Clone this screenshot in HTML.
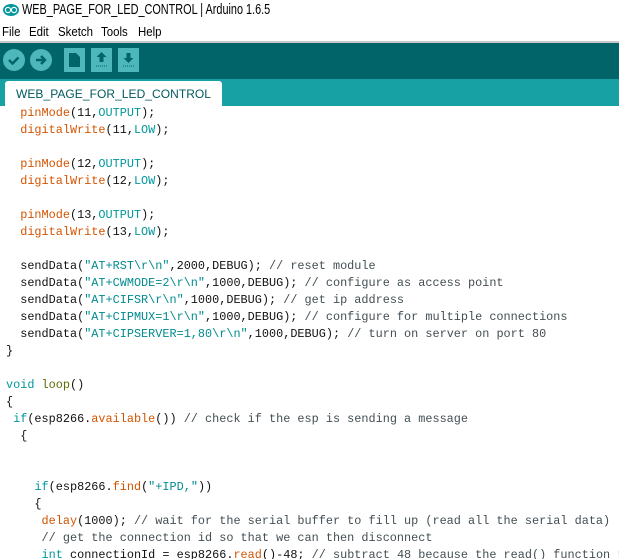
<!DOCTYPE html>
<html><head><meta charset="utf-8"><style>
*{margin:0;padding:0;box-sizing:border-box}
body{width:619px;height:559px;overflow:hidden;background:#fff;position:relative;font-family:"Liberation Sans",sans-serif}
.title{position:absolute;left:0;top:0;height:22px;width:619px;font-size:14.5px;color:#000}
.menu{position:absolute;left:0;top:22px;height:20px;font-size:13px}
.menu span{transform:scaleX(0.88);transform-origin:0 0;white-space:nowrap}
.sep{position:absolute;left:0;top:41px;width:619px;height:2px;background:#c8c8c8}
.tb{position:absolute;left:0;top:43px;width:619px;height:37px;background:#006468}
.tabs{position:absolute;left:0;top:79px;width:619px;height:27px;background:#17a1a5}
.tab{position:absolute;left:5px;top:2px;width:217px;height:25px;background:#fff;border-radius:3px 3px 0 0;color:#005a5e;font-size:12px;padding:6px 0 0 11px;letter-spacing:0.05px}
.code{position:absolute;left:6px;top:105px;width:613px;height:454px;overflow:hidden;font-family:"Liberation Mono",monospace;font-size:11.85px;line-height:17px;color:#111;white-space:pre}
.f{color:#d35400}.c{color:#00979c}.s{color:#008b8f}.k{color:#00979c}.m{color:#434f54}.o{color:#5e6d03}
</style></head><body>
<div class="title">
<svg style="position:absolute;left:3px;top:4px" width="16" height="12" viewBox="0 0 16 12"><ellipse cx="8" cy="6" rx="8" ry="6" fill="#00979c"/><circle cx="5" cy="6" r="2.6" fill="none" stroke="#fff" stroke-width="1.2"/><circle cx="11" cy="6" r="2.6" fill="none" stroke="#fff" stroke-width="1.2"/></svg>
<span style="position:absolute;left:22px;top:2px;transform:scaleX(0.75);transform-origin:0 0;white-space:nowrap">WEB_PAGE_FOR_LED_CONTROL | Arduino 1.6.5</span></div>
<div class="menu"><span style="position:absolute;left:2px;top:2px">File</span><span style="position:absolute;left:29px;top:2px">Edit</span><span style="position:absolute;left:58px;top:2px">Sketch</span><span style="position:absolute;left:101px;top:2px">Tools</span><span style="position:absolute;left:138px;top:2px">Help</span></div>
<div class="sep"></div>
<div class="tb">
<svg width="160" height="37" style="position:absolute;left:0;top:0">
<circle cx="14" cy="17" r="11" fill="#4db7bb"/><path d="M9 17l3.5 3.5 6-6" stroke="#006468" stroke-width="2.5" fill="none"/>
<circle cx="41" cy="17" r="11" fill="#4db7bb"/><path d="M36 17h8M41 13l4 4-4 4" stroke="#006468" stroke-width="2.5" fill="none"/>
<rect x="64" y="5" width="21" height="24" fill="#4db7bb"/><path d="M69 10h7l4 4v10h-11z" fill="#006468"/>
<rect x="91" y="5" width="21" height="24" fill="#4db7bb"/><path d="M101.5 9l-5 5h3v5h4v-5h3z" fill="#006468"/><path d="M96 23h11" stroke="#006468" stroke-dasharray="1 1"/>
<rect x="118" y="5" width="21" height="24" fill="#4db7bb"/><path d="M128.5 20l-5-5h3v-5h4v5h3z" fill="#006468"/><path d="M123 23h11" stroke="#006468" stroke-dasharray="1 1"/>
</svg></div>
<div class="tabs"><div class="tab">WEB_PAGE_FOR_LED_CONTROL</div></div>
<div class="code">  <span class="f">pinMode</span>(11,<span class="c">OUTPUT</span>);
  <span class="f">digitalWrite</span>(11,<span class="c">LOW</span>);

  <span class="f">pinMode</span>(12,<span class="c">OUTPUT</span>);
  <span class="f">digitalWrite</span>(12,<span class="c">LOW</span>);

  <span class="f">pinMode</span>(13,<span class="c">OUTPUT</span>);
  <span class="f">digitalWrite</span>(13,<span class="c">LOW</span>);

  sendData(<span class="s">"AT+RST\r\n"</span>,2000,DEBUG); <span class="m">// reset module</span>
  sendData(<span class="s">"AT+CWMODE=2\r\n"</span>,1000,DEBUG); <span class="m">// configure as access point</span>
  sendData(<span class="s">"AT+CIFSR\r\n"</span>,1000,DEBUG); <span class="m">// get ip address</span>
  sendData(<span class="s">"AT+CIPMUX=1\r\n"</span>,1000,DEBUG); <span class="m">// configure for multiple connections</span>
  sendData(<span class="s">"AT+CIPSERVER=1,80\r\n"</span>,1000,DEBUG); <span class="m">// turn on server on port 80</span>
}

<span class="k">void</span> <span class="o">loop</span>()
{
 <span class="k">if</span>(esp8266.<span class="f">available</span>()) <span class="m">// check if the esp is sending a message</span>
  {


    <span class="k">if</span>(esp8266.<span class="f">find</span>(<span class="s">"+IPD,"</span>))
    {
     <span class="f">delay</span>(1000); <span class="m">// wait for the serial buffer to fill up (read all the serial data)</span>
     <span class="m">// get the connection id so that we can then disconnect</span>
     <span class="k">int</span> connectionId = esp8266.<span class="f">read</span>()-48; <span class="m">// subtract 48 because the read() function re</span>
</div>
</body></html>
